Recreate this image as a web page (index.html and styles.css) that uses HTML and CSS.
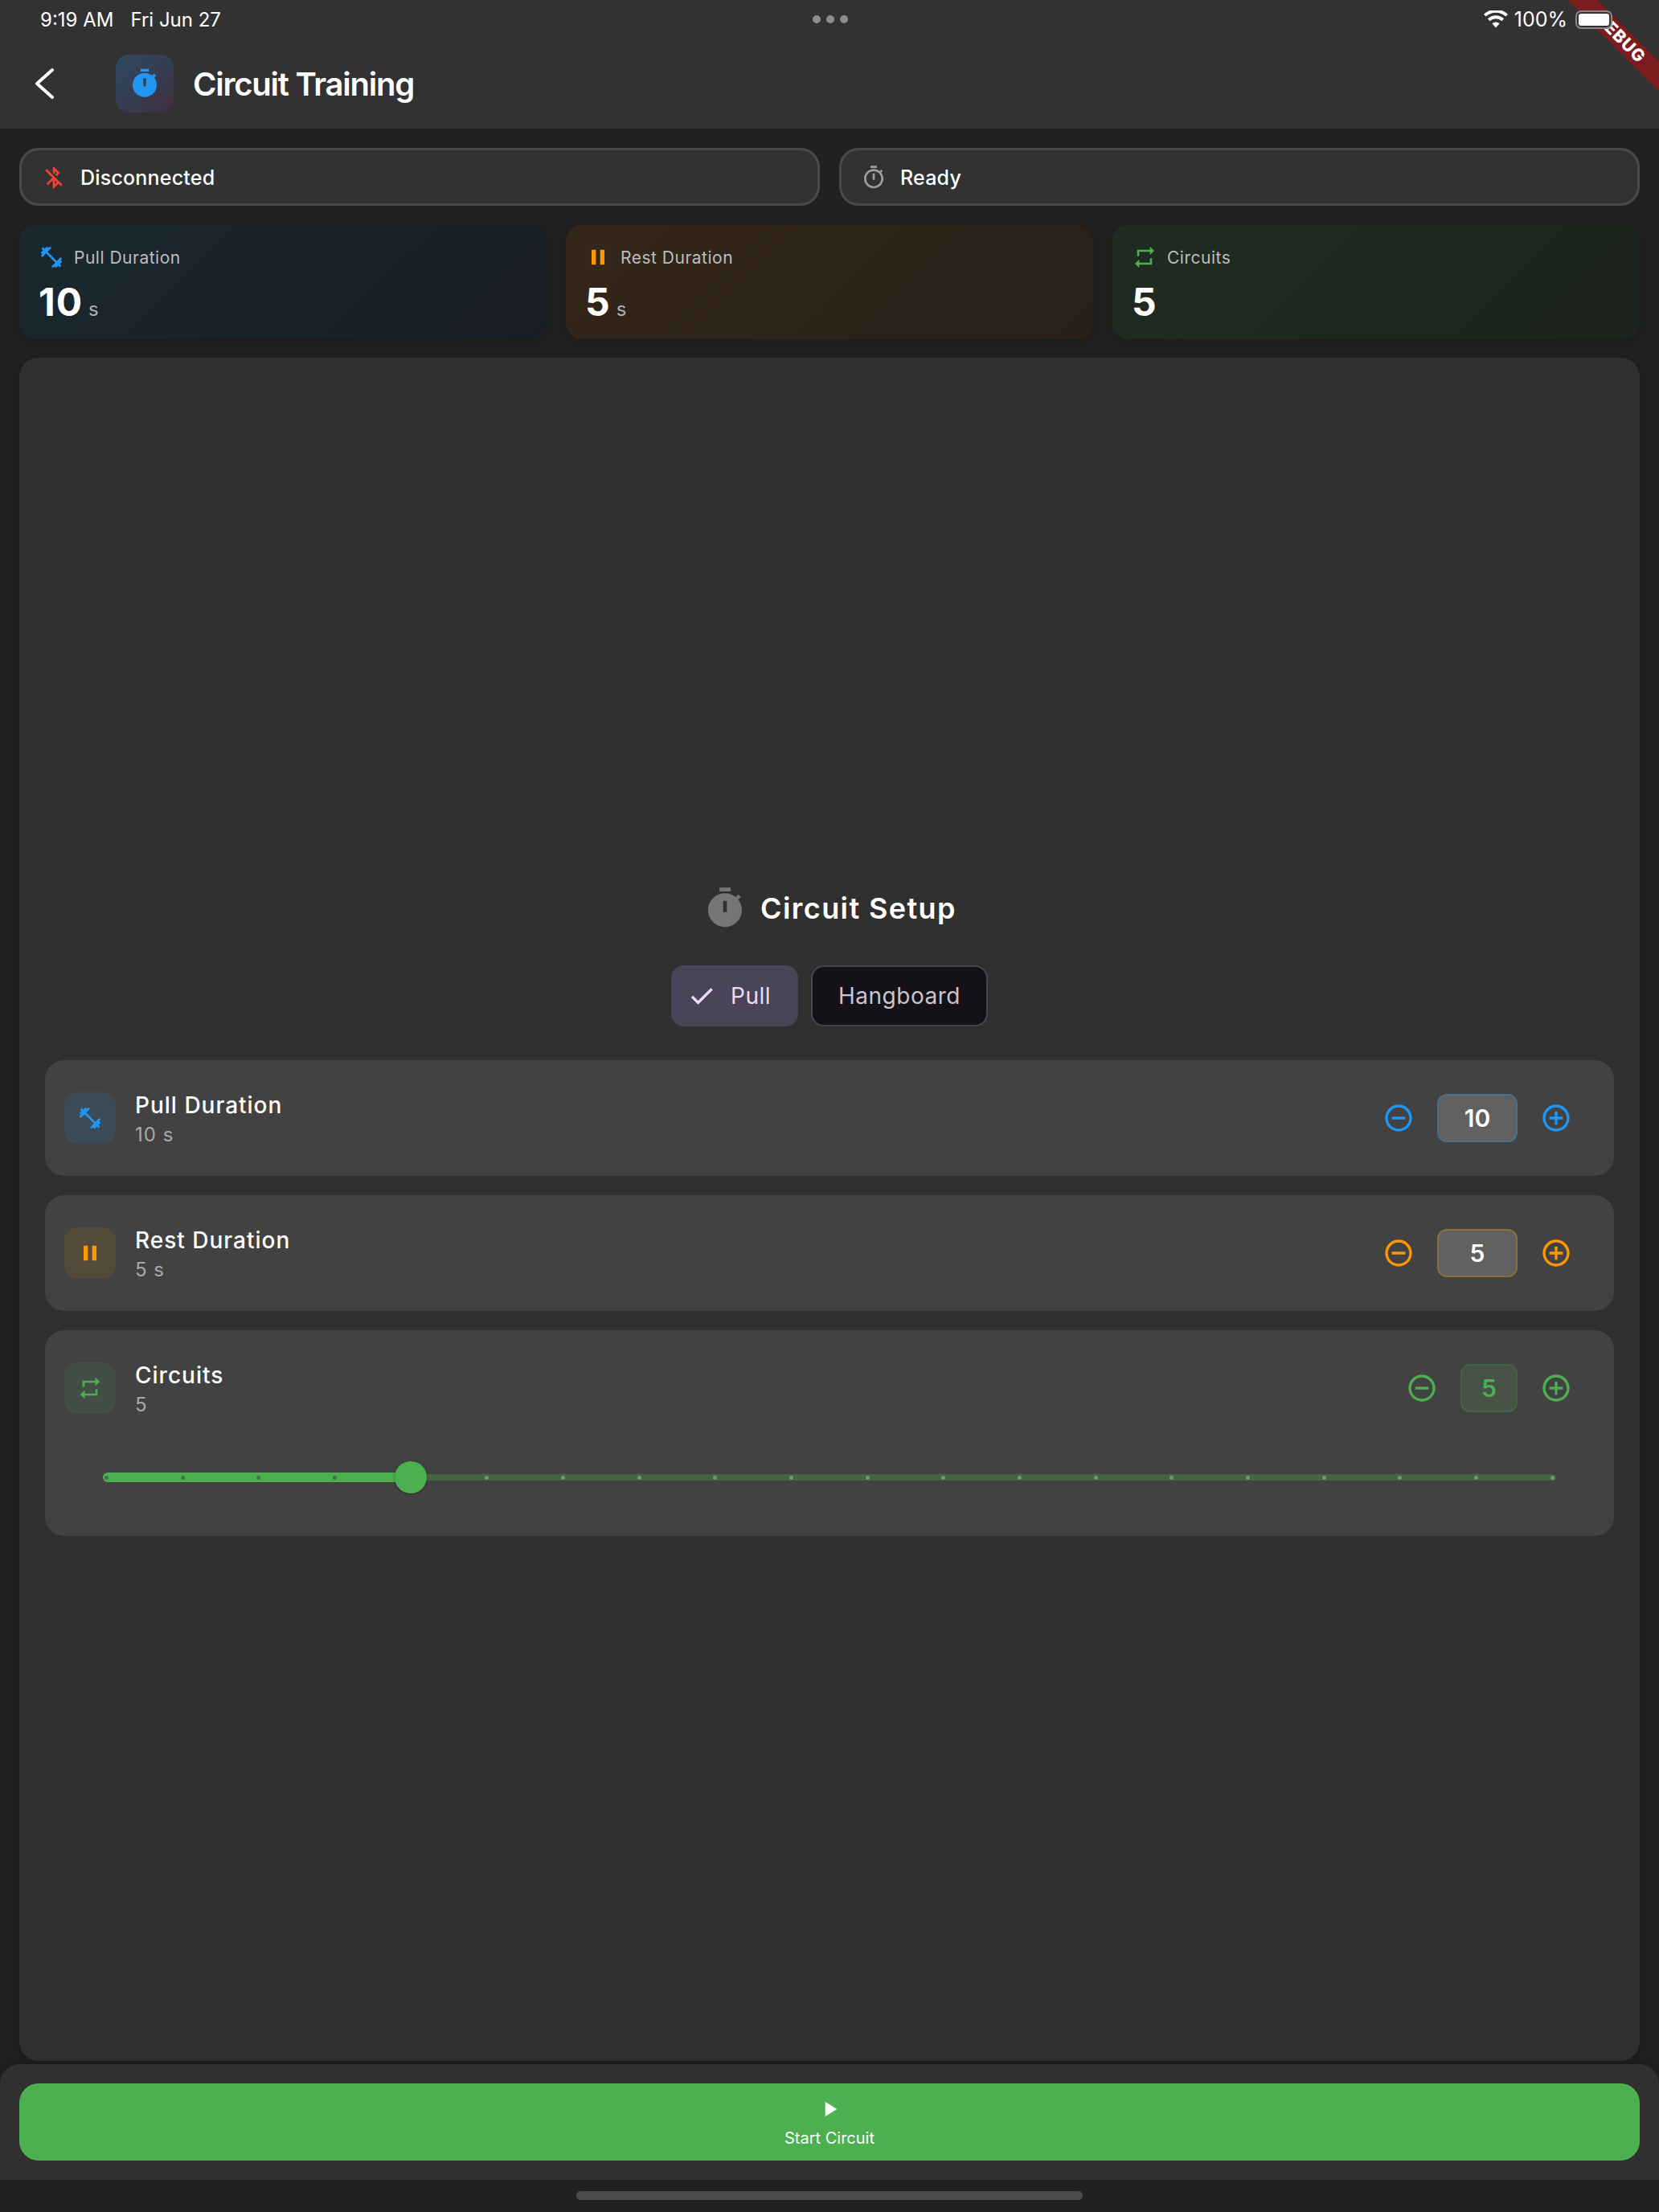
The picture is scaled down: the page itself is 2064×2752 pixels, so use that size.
FILE: index.html
```html
<!DOCTYPE html>
<html lang="en">
<head>
  <meta charset="UTF-8" />
  <title>Circuit Training</title>
  <link rel="stylesheet" href="styles.css">
</head>
<body>
  <div class="page">
    <header class="app-header">
      <div class="status-bar">
        <div class="status-left"><span>9:19 AM</span><span>Fri Jun 27</span></div>
        <div class="status-dots"><i></i><i></i><i></i></div>
        <div class="status-right">
          <svg class="wifi" viewBox="0 0 30 22"><path d="M15 21.5l-4.6-5.2a6.6 6.6 0 0 1 9.2 0z"/><path d="M7.6 13.2l-2.7-3a14.6 14.6 0 0 1 20.2 0l-2.7 3a10.6 10.6 0 0 0-14.8 0z"/><path d="M2.6 7.6L0 4.7a21.8 21.8 0 0 1 30 0l-2.6 2.9a18 18 0 0 0-24.8 0z"/></svg>
          <span>100%</span>
          <div class="battery"><div class="battery-fill"></div></div>
        </div>
      </div>
      <div class="title-row">
        <svg class="back" viewBox="0 0 24 40"><path d="M22 3L3 20l19 17"/></svg>
        <div class="title-icon">
          <svg class="icon-40" viewBox="0 0 24 24"><path fill="#2196f3" d="M9 1h6v2H9z M19.03 7.39l1.42-1.42c-.43-.51-.9-.99-1.41-1.41l-1.42 1.42C16.07 4.74 14.12 4 12 4c-4.97 0-9 4.03-9 9s4.02 9 9 9 9-4.03 9-9c0-2.12-.74-4.07-1.97-5.61zM13 14h-2V8h2v6z"/></svg>
        </div>
        <h1>Circuit Training</h1>
      </div>
    </header>

    <section class="pills">
      <div class="pill">
        <svg class="icon-32" viewBox="0 0 24 24"><path fill="#f44336" d="M13 5.83l1.88 1.88-1.6 1.6 1.41 1.41 3.02-3.02L12 2h-1v5.03l2 2v-3.2zM5.41 4L4 5.41 10.59 12 5 17.59 6.41 19 11 14.41V22h1l4.29-4.29 2.3 2.29L20 18.59 5.41 4zM13 18.17v-3.76l1.88 1.88L13 18.17z"/></svg>
        <span>Disconnected</span>
      </div>
      <div class="pill">
        <svg class="icon-32" viewBox="0 0 24 24"><path fill="#9e9e9e" d="M15 1H9v2h6V1zm-4 13h2V8h-2v6zm8.03-6.61l1.42-1.42c-.43-.51-.9-.99-1.41-1.41l-1.42 1.42C16.07 4.74 14.12 4 12 4c-4.97 0-9 4.03-9 9s4.02 9 9 9 9-4.03 9-9c0-2.12-.74-4.07-1.97-5.61zM12 20c-3.87 0-7-3.13-7-7s3.13-7 7-7 7 3.13 7 7-3.13 7-7 7z"/></svg>
        <span>Ready</span>
      </div>
    </section>

    <section class="stats">
      <div class="stat stat-blue">
        <div class="stat-label">
          <svg class="icon-32" viewBox="0 0 24 24"><path fill="#2196f3" d="M20.57 14.86L22 13.43 20.57 12 17 15.57 8.43 7 12 3.43 10.57 2 9.14 3.43 7.71 2 5.57 4.14 4.14 2.71 2.71 4.14l1.43 1.43L2 7.71l1.43 1.43L2 10.57 3.43 12 7 8.43 15.57 17 12 20.57 13.43 22l1.43-1.43L16.29 22l2.14-2.14 1.43 1.43 1.43-1.43-1.43-1.43L22 16.29z"/></svg>
          <span>Pull Duration</span>
        </div>
        <div class="stat-value">10<small>s</small></div>
      </div>
      <div class="stat stat-orange">
        <div class="stat-label">
          <svg class="icon-32" viewBox="0 0 24 24"><path fill="#ff9800" d="M6 19h4V5H6v14zm8-14v14h4V5h-4z"/></svg>
          <span>Rest Duration</span>
        </div>
        <div class="stat-value">5<small>s</small></div>
      </div>
      <div class="stat stat-green">
        <div class="stat-label">
          <svg class="icon-32" viewBox="0 0 24 24"><path fill="#4caf50" d="M7 7h10v3l4-4-4-4v3H5v6h2V7zm10 10H7v-3l-4 4 4 4v-3h12v-6h-2v4z"/></svg>
          <span>Circuits</span>
        </div>
        <div class="stat-value">5</div>
      </div>
    </section>

    <main class="setup-card">
      <div class="setup-title">
        <svg class="icon-56" viewBox="0 0 24 24"><path fill="#757575" d="M9 1h6v2H9z M19.03 7.39l1.42-1.42c-.43-.51-.9-.99-1.41-1.41l-1.42 1.42C16.07 4.74 14.12 4 12 4c-4.97 0-9 4.03-9 9s4.02 9 9 9 9-4.03 9-9c0-2.12-.74-4.07-1.97-5.61zM13 14h-2V8h2v6z"/></svg>
        <h2>Circuit Setup</h2>
      </div>
      <div class="chips">
        <div class="chip chip-on">
          <svg class="icon-36" viewBox="0 0 24 24"><path class="check" d="M9 16.17L4.83 12l-1.42 1.41L9 19 21 7l-1.41-1.41z"/></svg>
          <span>Pull</span>
        </div>
        <div class="chip chip-off"><span>Hangboard</span></div>
      </div>

      <div class="rows">
        <div class="row">
          <div class="row-top">
            <div class="row-icon bg-blue">
              <svg class="icon-32" viewBox="0 0 24 24"><path fill="#2196f3" d="M20.57 14.86L22 13.43 20.57 12 17 15.57 8.43 7 12 3.43 10.57 2 9.14 3.43 7.71 2 5.57 4.14 4.14 2.71 2.71 4.14l1.43 1.43L2 7.71l1.43 1.43L2 10.57 3.43 12 7 8.43 15.57 17 12 20.57 13.43 22l1.43-1.43L16.29 22l2.14-2.14 1.43 1.43 1.43-1.43-1.43-1.43L22 16.29z"/></svg>
            </div>
            <div class="row-text"><div class="row-name">Pull Duration</div><div class="row-sub">10 s</div></div>
            <div class="stepper">
              <svg class="icon-40" viewBox="0 0 24 24"><path fill="#2196f3" d="M7 11v2h10v-2H7zm5-9C6.48 2 2 6.48 2 12s4.48 10 10 10 10-4.48 10-10S17.52 2 12 2zm0 18c-4.41 0-8-3.59-8-8s3.59-8 8-8 8 3.59 8 8-3.59 8-8 8z"/></svg>
              <div class="step-value border-blue">10</div>
              <svg class="icon-40" viewBox="0 0 24 24"><path fill="#2196f3" d="M13 7h-2v4H7v2h4v4h2v-4h4v-2h-4V7zm-1-5C6.48 2 2 6.48 2 12s4.48 10 10 10 10-4.48 10-10S17.52 2 12 2zm0 18c-4.41 0-8-3.59-8-8s3.59-8 8-8 8 3.59 8 8-3.59 8-8 8z"/></svg>
            </div>
          </div>
        </div>

        <div class="row">
          <div class="row-top">
            <div class="row-icon bg-orange">
              <svg class="icon-32" viewBox="0 0 24 24"><path fill="#ff9800" d="M6 19h4V5H6v14zm8-14v14h4V5h-4z"/></svg>
            </div>
            <div class="row-text"><div class="row-name">Rest Duration</div><div class="row-sub">5 s</div></div>
            <div class="stepper">
              <svg class="icon-40" viewBox="0 0 24 24"><path fill="#ff9800" d="M7 11v2h10v-2H7zm5-9C6.48 2 2 6.48 2 12s4.48 10 10 10 10-4.48 10-10S17.52 2 12 2zm0 18c-4.41 0-8-3.59-8-8s3.59-8 8-8 8 3.59 8 8-3.59 8-8 8z"/></svg>
              <div class="step-value border-orange">5</div>
              <svg class="icon-40" viewBox="0 0 24 24"><path fill="#ff9800" d="M13 7h-2v4H7v2h4v4h2v-4h4v-2h-4V7zm-1-5C6.48 2 2 6.48 2 12s4.48 10 10 10 10-4.48 10-10S17.52 2 12 2zm0 18c-4.41 0-8-3.59-8-8s3.59-8 8-8 8 3.59 8 8-3.59 8-8 8z"/></svg>
            </div>
          </div>
        </div>

        <div class="row row-tall">
          <div class="row-top">
            <div class="row-icon bg-green">
              <svg class="icon-32" viewBox="0 0 24 24"><path fill="#4caf50" d="M7 7h10v3l4-4-4-4v3H5v6h2V7zm10 10H7v-3l-4 4 4 4v-3h12v-6h-2v4z"/></svg>
            </div>
            <div class="row-text"><div class="row-name">Circuits</div><div class="row-sub">5</div></div>
            <div class="stepper">
              <svg class="icon-40" viewBox="0 0 24 24"><path fill="#4caf50" d="M7 11v2h10v-2H7zm5-9C6.48 2 2 6.48 2 12s4.48 10 10 10 10-4.48 10-10S17.52 2 12 2zm0 18c-4.41 0-8-3.59-8-8s3.59-8 8-8 8 3.59 8 8-3.59 8-8 8z"/></svg>
              <div class="step-value step-green">5</div>
              <svg class="icon-40" viewBox="0 0 24 24"><path fill="#4caf50" d="M13 7h-2v4H7v2h4v4h2v-4h4v-2h-4V7zm-1-5C6.48 2 2 6.48 2 12s4.48 10 10 10 10-4.48 10-10S17.52 2 12 2zm0 18c-4.41 0-8-3.59-8-8s3.59-8 8-8 8 3.59 8 8-3.59 8-8 8z"/></svg>
            </div>
          </div>
          <div class="slider">
            <div class="slider-on"></div>
            <div class="slider-off"></div>
            <div class="ticks">
              <i class="on"></i><i class="on"></i><i class="on"></i><i class="on"></i><i></i><i></i><i></i><i></i><i></i><i></i><i></i><i></i><i></i><i></i><i></i><i></i><i></i><i></i><i></i><i></i>
            </div>
            <div class="thumb"></div>
          </div>
        </div>
      </div>
    </main>

    <footer class="bottom-bar">
      <button class="start-btn">
        <svg class="icon-32" viewBox="0 0 24 24"><path fill="#fff" d="M8 5v14l11-7z"/></svg>
        <span>Start Circuit</span>
      </button>
    </footer>
    <div class="home-area"><div class="home-indicator"></div></div>

    <div class="debug-banner">DEBUG</div>
  </div>
</body>
</html>
```

FILE: styles.css
```css
* {
  box-sizing: border-box;
}

body {
  margin: 0;
  background: #212121;
  font-family: Inter, "Noto Sans", sans-serif;
  color: #fff;
}

svg {
  display: block;
  flex: none;
}

.icon-32 { width: 32px; height: 32px; }
.icon-36 { width: 36px; height: 36px; }
.icon-40 { width: 40px; height: 40px; }
.icon-56 { width: 56px; height: 56px; }

.page {
  position: relative;
  width: 2064px;
  height: 2752px;
  overflow: hidden;
  display: flex;
  flex-direction: column;
}

/* header */
.app-header {
  height: 160px;
  background: #323232;
  flex: none;
}

.status-bar {
  height: 48px;
  padding: 0 58px 0 50px;
  display: flex;
  align-items: center;
  justify-content: space-between;
  position: relative;
  font-size: 24px;
}

.status-left {
  display: flex;
  gap: 21px;
}

.status-dots {
  position: absolute;
  left: 1011px;
  top: 19px;
  display: flex;
  gap: 7px;
}

.status-dots i {
  width: 10px;
  height: 10px;
  border-radius: 50%;
  background: #8e8e8e;
}

.status-right {
  position: relative;
  z-index: 2;
  display: flex;
  align-items: center;
  gap: 8px;
  font-size: 25px;
}

.wifi {
  width: 30px;
  height: 22px;
  fill: #fff;
}

.battery {
  width: 46px;
  height: 23px;
  margin-left: 2px;
  padding: 2px;
  border: 2px solid #8a8a8a;
  border-radius: 7px;
  background: #323232;
}

.battery-fill {
  height: 100%;
  background: #fff;
  border-radius: 3px;
}

.title-row {
  height: 112px;
  padding-left: 43px;
  display: flex;
  align-items: center;
}

.back {
  width: 24px;
  height: 40px;
  fill: none;
  stroke: #fff;
  stroke-width: 4;
  stroke-linecap: round;
  stroke-linejoin: round;
}

.title-icon {
  width: 72px;
  height: 72px;
  margin-left: 77px;
  border-radius: 16px;
  background: linear-gradient(135deg, #2c4a63, #40303f);
  display: flex;
  align-items: center;
  justify-content: center;
}

h1 {
  margin: 0 0 0 24px;
  font-size: 40px;
  font-weight: 600;
  letter-spacing: -1.25px;
}

/* status pills */
.pills {
  display: grid;
  grid-template-columns: 1fr 1fr;
  gap: 24px;
  padding: 24px 24px 0;
}

.pill {
  height: 72px;
  padding: 2px 24px 0;
  display: flex;
  align-items: center;
  gap: 17px;
  background: #323232;
  border: 3px solid #4a4a4a;
  border-radius: 24px;
  font-size: 25px;
  font-weight: 500;
  letter-spacing: 0.2px;
}

/* stat cards */
.stats {
  display: grid;
  grid-template-columns: repeat(3, 1fr);
  gap: 24px;
  padding: 24px 24px 0;
}

.stat {
  height: 142px;
  padding: 24px 24px 0;
  border-radius: 20px;
  box-shadow: 0 2px 8px rgba(0, 0, 0, 0.2);
}

.stat-blue { background: linear-gradient(135deg, #1a2830, #191d26); }
.stat-orange { background: linear-gradient(135deg, #33261a, #292018); }
.stat-green { background: linear-gradient(135deg, #1f2c21, #1c241d); }

.stat-label {
  display: flex;
  align-items: center;
  gap: 12px;
  font-size: 21px;
  letter-spacing: 0.5px;
  color: #bdbdbd;
}

.stat-value {
  margin-top: 14px;
  font-size: 48px;
  font-weight: 700;
  line-height: 52px;
  letter-spacing: 1px;
}

.stat-value small {
  margin-left: 7px;
  font-size: 24px;
  font-weight: 400;
  color: #b0b0b0;
}

/* main card */
.setup-card {
  flex: 1;
  margin: 23px 24px 4px;
  padding: 3px 32px 0;
  background: #303030;
  border-radius: 24px;
  box-shadow: 0 2px 8px rgba(0, 0, 0, 0.2);
  display: flex;
  flex-direction: column;
  justify-content: center;
}

.setup-title {
  display: flex;
  justify-content: center;
  align-items: center;
  gap: 16px;
}

h2 {
  margin: 0;
  font-size: 36px;
  font-weight: 600;
  letter-spacing: 1.4px;
}

.chips {
  margin-top: 43px;
  display: flex;
  justify-content: center;
  gap: 16px;
}

.chip {
  height: 76px;
  padding: 0 32px;
  display: flex;
  align-items: center;
  border-radius: 16px;
  font-size: 28px;
  letter-spacing: 0.5px;
}

.chip-on {
  padding: 0 34px 0 20px;
  gap: 18px;
  background: #4a4458;
  color: #e8def8;
}

.check {
  fill: #e8def8;
  stroke: #e8def8;
  stroke-width: 0.4;
}

.chip-off {
  background: #141218;
  border: 2px solid #49454f;
  color: #cac4d0;
}

.rows {
  margin-top: 42px;
  display: flex;
  flex-direction: column;
  gap: 24px;
}

.row {
  height: 144px;
  padding: 40px 24px;
  background: #424242;
  border-radius: 24px;
}

.row-tall {
  height: 256px;
}

.row-top {
  height: 64px;
  display: flex;
  align-items: center;
}

.row-icon {
  width: 64px;
  height: 64px;
  border-radius: 16px;
  display: flex;
  align-items: center;
  justify-content: center;
}

.bg-blue { background: #3b4b58; }
.bg-orange { background: #544a3a; }
.bg-green { background: #434f44; }

.row-text {
  flex: 1;
  margin-left: 24px;
  padding-top: 2px;
}

.row-name {
  font-size: 28px;
  font-weight: 500;
  letter-spacing: 1px;
}

.row-sub {
  margin-top: 5px;
  font-size: 24px;
  letter-spacing: 1px;
  color: #a8a8a8;
}

.stepper {
  display: flex;
  align-items: center;
  gap: 28px;
  margin-right: 28px;
}

.step-value {
  width: 100px;
  height: 60px;
  background: #616161;
  border: 2px solid;
  border-radius: 12px;
  display: flex;
  align-items: center;
  justify-content: center;
  font-size: 30px;
  font-weight: 600;
}

.border-blue { border-color: #47708f; }
.border-orange { border-color: #8f6c3d; }

.step-green {
  width: 71px;
  background: #475347;
  border-color: #40663f;
  color: #4caf50;
}

/* slider */
.slider {
  position: relative;
  height: 40px;
  margin: 59px 48px 0;
}

.slider-on {
  position: absolute;
  left: 0;
  top: 14px;
  width: 384px;
  height: 12px;
  background: #4caf50;
  border-radius: 6px 0 0 6px;
}

.slider-off {
  position: absolute;
  left: 384px;
  right: 0;
  top: 16px;
  height: 8px;
  background: #466346;
  border-radius: 0 4px 4px 0;
}

.ticks {
  position: absolute;
  left: 2px;
  right: 2px;
  top: 18px;
  display: flex;
  justify-content: space-between;
}

.ticks i {
  width: 5px;
  height: 5px;
  border-radius: 50%;
  background: #6f9a70;
}

.ticks i.on {
  background: #3f7050;
}

.thumb {
  position: absolute;
  left: 363px;
  top: 0;
  width: 40px;
  height: 40px;
  background: #4caf50;
  border-radius: 50%;
  box-shadow: 0 1px 3px rgba(0, 0, 0, 0.4);
}

/* bottom */
.bottom-bar {
  flex: none;
  height: 144px;
  padding: 24px;
  background: #303030;
  border-radius: 24px 24px 0 0;
  box-shadow: 0 -2px 8px rgba(0, 0, 0, 0.2);
}

.start-btn {
  width: 100%;
  height: 96px;
  border: none;
  border-radius: 24px;
  background: #4caf50;
  color: #fff;
  font-family: inherit;
  font-size: 20px;
  font-weight: 400;
  display: flex;
  flex-direction: column;
  align-items: center;
  justify-content: center;
  gap: 8px;
}

.home-area {
  flex: none;
  height: 40px;
  display: flex;
  justify-content: center;
  padding-top: 14px;
}

.home-indicator {
  width: 630px;
  height: 11px;
  border-radius: 6px;
  background: #4c4c4c;
}

/* debug ribbon */
.debug-banner {
  position: absolute;
  left: 1866px;
  top: 34px;
  width: 300px;
  height: 26px;
  transform: rotate(45deg);
  background: #7c1c1f;
  text-align: center;
  font-size: 21px;
  font-weight: 800;
  line-height: 26px;
  letter-spacing: 1px;
  z-index: 1;
}
```
